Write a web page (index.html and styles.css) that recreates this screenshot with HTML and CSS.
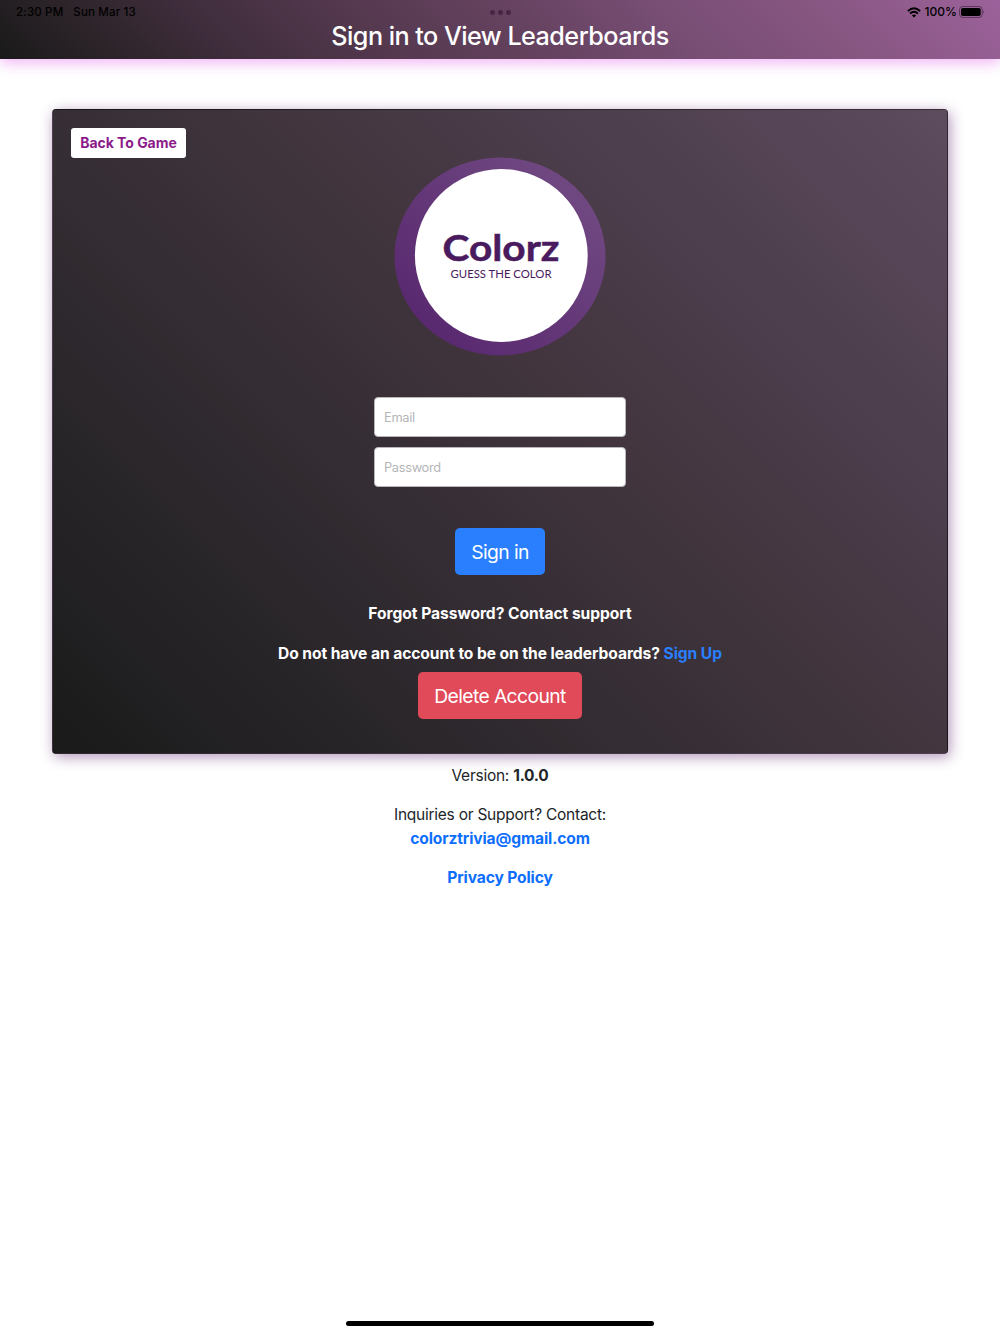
FILE: index.html
```html
<!DOCTYPE html>
<html lang="en">
<head>
<meta charset="utf-8">
<title>Sign in to View Leaderboards</title>
<link rel="stylesheet" href="styles.css">
</head>
<body>
<header class="header">
  <div class="status">
    <div class="status-left"><span class="time">2:30 PM</span><span class="date">Sun Mar 13</span></div>
    <div class="dots"><i></i><i></i><i></i></div>
    <div class="status-right">
      <svg class="wifi" width="14" height="11" viewBox="0 0 14 11" fill="none" stroke="#000" stroke-width="1.9"><path d="M.8 4.1Q7-1.6 13.2 4.1"/><path d="M3 6.5Q7 2.9 11 6.5"/><path d="M7 10.6L4.9 8.4Q7 6.8 9.1 8.4Z" fill="#000" stroke="none"/></svg>
      <span class="percent">100%</span>
      <svg class="battery" width="26" height="12" viewBox="0 0 26 12"><rect x=".5" y=".5" width="22.7" height="11" rx="3.2" fill="none" stroke="#000" stroke-opacity=".4"/><rect x="2" y="2" width="19.7" height="8" rx="1.8"/><path d="M24.3 4.2Q25.8 6 24.3 7.8Z" opacity=".5"/></svg>
    </div>
  </div>
  <h1 class="title">Sign in to View Leaderboards</h1>
</header>
<main class="card">
  <button class="back">Back To Game</button>
  <svg class="logo" width="212" height="200" viewBox="0 0 212 200" role="img" aria-label="Colorz">
    <defs><linearGradient id="ring" x1="0.15" y1="0.85" x2="0.85" y2="0.15"><stop offset="0" stop-color="#592970"/><stop offset="1" stop-color="#704881"/></linearGradient></defs>
    <ellipse cx="106" cy="99.5" rx="105.5" ry="99" fill="url(#ring)"/>
    <circle cx="107.3" cy="98.5" r="86.4" fill="#fff"/>
    <text class="logo-name" x="48.5" y="104.4" textLength="117" lengthAdjust="spacingAndGlyphs">Colorz</text>
    <text class="logo-tag" x="56.5" y="121" textLength="101" lengthAdjust="spacingAndGlyphs">GUESS THE COLOR</text>
  </svg>
  <form class="form">
    <input class="field" type="email" placeholder="Email">
    <input class="field" type="password" placeholder="Password">
    <button class="btn primary" type="button">Sign in</button>
  </form>
  <p class="forgot">Forgot Password? Contact support</p>
  <p class="signup">Do not have an account to be on the leaderboards? <a>Sign Up</a></p>
  <button class="btn danger">Delete Account</button>
</main>
<footer class="footer">
  <p class="version">Version: <b>1.0.0</b></p>
  <div class="contact">
    <p class="inquiry">Inquiries or Support? Contact:</p>
    <a class="mail">colorztrivia@gmail.com</a>
  </div>
  <a class="privacy">Privacy Policy</a>
</footer>
<div class="home-bar"></div>
</body>
</html>
```
FILE: styles.css
```css
* { box-sizing: border-box; }
body {
  margin: 0;
  height: 1334px;
  display: flex;
  flex-direction: column;
  align-items: center;
  background: #fff;
  color: #212529;
  font: 16px/24px Inter, sans-serif;
  overflow: hidden;
}
p, h1 { margin: 0; }
button { font-family: inherit; border: 0; padding: 0; }
.header {
  width: 100%;
  height: 59px;
  flex: none;
  background: linear-gradient(45deg, #1a1a1a 0%, #33272f 15%, #3b2b39 20%, #55394f 38%, #65425f 52%, #784e75 67%, #85557f 80%, #9c629b 100%);
  box-shadow: 0 4px 13px rgba(225, 100, 235, .48);
}
.status {
  height: 23px;
  display: grid;
  grid-template-columns: 1fr auto 1fr;
  align-items: center;
  padding: 1px 15px 0 16px;
  color: #000;
  font-size: 11.5px;
  line-height: 22px;
  font-weight: 500;
}
.status-left, .status-right, .dots { display: flex; align-items: center; }
.status-left { gap: 10px; letter-spacing: .17px; }
.status-right { justify-content: flex-end; }
.percent { margin: 0 2px 0 4px; font-size: 12px; }
.dots { gap: 3px; }
.dots i { width: 5px; height: 5px; border-radius: 50%; background: #492544; }
.title {
  color: #fff;
  text-align: center;
  font-size: 25.2px;
  line-height: 26px;
  font-weight: 500;
  letter-spacing: -.54px;
}
.card {
  width: 896px;
  height: 645px;
  flex: none;
  margin-top: 50px;
  padding: 18px;
  display: flex;
  flex-direction: column;
  align-items: center;
  border: 1px solid rgba(0, 0, 0, .125);
  border-radius: 4px;
  background: linear-gradient(45deg, #1a1a1a 0%, #252326 17%, #342d33 38%, #42353e 57%, #4b3d4b 73%, #5d4b5e 100%);
  box-shadow: 2px 3px 14px rgba(85, 20, 105, .45);
  color: #fff;
  font-size: 15.6px;
  font-weight: 700;
}
.back {
  align-self: flex-start;
  width: 115px;
  height: 30px;
  padding-bottom: 1px;
  border-radius: 3px;
  background: #fff;
  color: #8b1a8b;
  font-size: 14px;
  font-weight: 700;
  letter-spacing: -.04px;
}
.logo { margin-top: -1px; flex: none; }
.logo-name { font: 700 37px Lato, sans-serif; fill: #4a1a5e; stroke: #4a1a5e; stroke-width: .5px; }
.logo-tag { font: 400 12px Lato, sans-serif; fill: #4a1a5e; }
.form { display: flex; flex-direction: column; align-items: center; gap: 10px; margin-top: 40px; }
.field {
  width: 252px;
  height: 40px;
  padding: 0 9px;
  border: 1px solid #b9b6b9;
  border-radius: 4px;
  background: #fff;
  font: 12.8px Inter, sans-serif;
  letter-spacing: -.3px;
}
.field::placeholder { color: #b5b5b8; opacity: 1; }
.btn { height: 47px; border-radius: 5px; color: #fff; font-size: 19.3px; font-weight: 400; letter-spacing: -.6px; flex: none; }
.primary { width: 90px; margin-top: 31px; background: #2a7fff; }
.danger { width: 164px; margin-top: 6px; background: #e14a59; }
.forgot { margin-top: 27px; letter-spacing: -.04px; }
.signup { margin-top: 16px; letter-spacing: -.07px; }
.signup a { color: #2a7fff; }
.footer { display: grid; gap: 15px; margin-top: 10px; text-align: center; font-size: 15.6px; }
.contact { display: grid; }
.version, .inquiry { font-size: 15.5px; letter-spacing: -.25px; }
.inquiry { height: 24px; }
.footer b { font-weight: 700; }
.footer a { color: #0d6efd; font-weight: 700; letter-spacing: -.13px; }
.home-bar { width: 308px; height: 5px; margin: auto 0 8px; border-radius: 3px; background: #000; flex: none; }
```
